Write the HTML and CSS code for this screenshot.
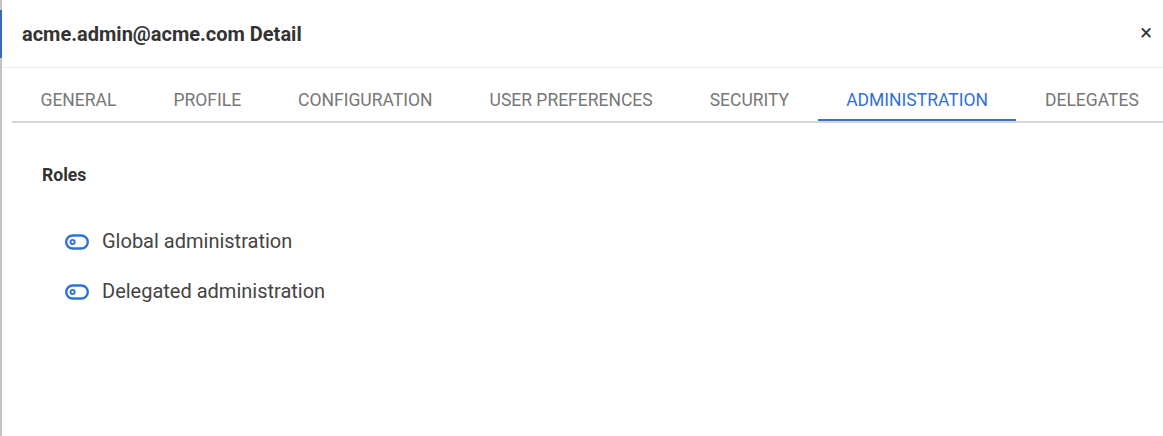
FILE: index.html
```html
<!DOCTYPE html>
<html>
<head>
<meta charset="utf-8">
<link rel="stylesheet" href="styles.css">
</head>
<body>
<div class="edge"><div class="edge-blue"></div></div>
<div class="dialog">
  <header class="head">
    <h1 class="title">acme.admin@acme.com Detail</h1>
    <span class="close">×</span>
  </header>
  <nav class="tabs">
    <div class="tab">General</div>
    <div class="tab">Profile</div>
    <div class="tab">Configuration</div>
    <div class="tab">User Preferences</div>
    <div class="tab">Security</div>
    <div class="tab active">Administration</div>
    <div class="tab">Delegates</div>
  </nav>
  <section class="content">
    <h2 class="section-title">Roles</h2>
    <ul class="roles">
      <li class="role">
        <svg class="toggle" width="26" height="16" viewBox="0 0 26 16"><rect x="2.2" y="1.5" width="21.6" height="13" rx="6.5" fill="none" stroke="#2f72d6" stroke-width="2.4"/><circle cx="8.6" cy="8" r="2.1" fill="none" stroke="#2f72d6" stroke-width="1.9"/></svg>
        <span>Global administration</span>
      </li>
      <li class="role">
        <svg class="toggle" width="26" height="16" viewBox="0 0 26 16"><rect x="2.2" y="1.5" width="21.6" height="13" rx="6.5" fill="none" stroke="#2f72d6" stroke-width="2.4"/><circle cx="8.6" cy="8" r="2.1" fill="none" stroke="#2f72d6" stroke-width="1.9"/></svg>
        <span>Delegated administration</span>
      </li>
    </ul>
  </section>
</div>
</body>
</html>
```
FILE: styles.css
```css
html, body {
  margin: 0;
  padding: 0;
  background: #fff;
  width: 1163px;
  height: 436px;
  overflow: hidden;
  font-family: Roboto, "Liberation Sans", sans-serif;
}
.edge {
  position: absolute;
  left: 0;
  top: 0;
  width: 2px;
  height: 436px;
  background: #c4c4c4;
}
.edge-blue {
  margin-top: 10px;
  height: 48px;
  background: #3a67c0;
}
.dialog {
  display: flex;
  flex-direction: column;
  height: 436px;
}
.head {
  display: flex;
  align-items: center;
  justify-content: space-between;
  height: 67px;
  border-bottom: 1px solid #eeeeee;
  padding: 0 11px 0 22px;
}
.title {
  margin: 0;
  font-size: 20px;
  font-weight: 700;
  color: #333;
}
.close {
  font-size: 22px;
  color: #333;
  line-height: 1;
  padding-bottom: 2px;
}
.tabs {
  display: flex;
  margin-left: 12px;
  height: 53px;
  border-bottom: 2px solid #d2d6dc;
  overflow: hidden;
}
.tab {
  flex-shrink: 0;
  white-space: nowrap;
  padding: 0 28.5px;
  display: flex;
  align-items: center;
  padding-top: 12px;
  font-size: 17.5px;
  text-transform: uppercase;
  color: #777;
  border-bottom: 2px solid transparent;
}
.tab.active {
  color: #2f72d6;
  border-bottom-color: #3a6fc6;
}
.content {
  padding: 42px 42px;
}
.section-title {
  margin: 0;
  font-size: 17.6px;
  font-weight: 700;
  color: #333;
  line-height: 20px;
}
.roles {
  list-style: none;
  margin: 45px 0 0 22px;
  padding: 0;
  display: flex;
  flex-direction: column;
  gap: 27px;
}
.role {
  display: flex;
  align-items: center;
  gap: 12px;
  font-size: 20px;
  color: #444;
  line-height: 23px;
}
.toggle {
  display: block;
}
```
